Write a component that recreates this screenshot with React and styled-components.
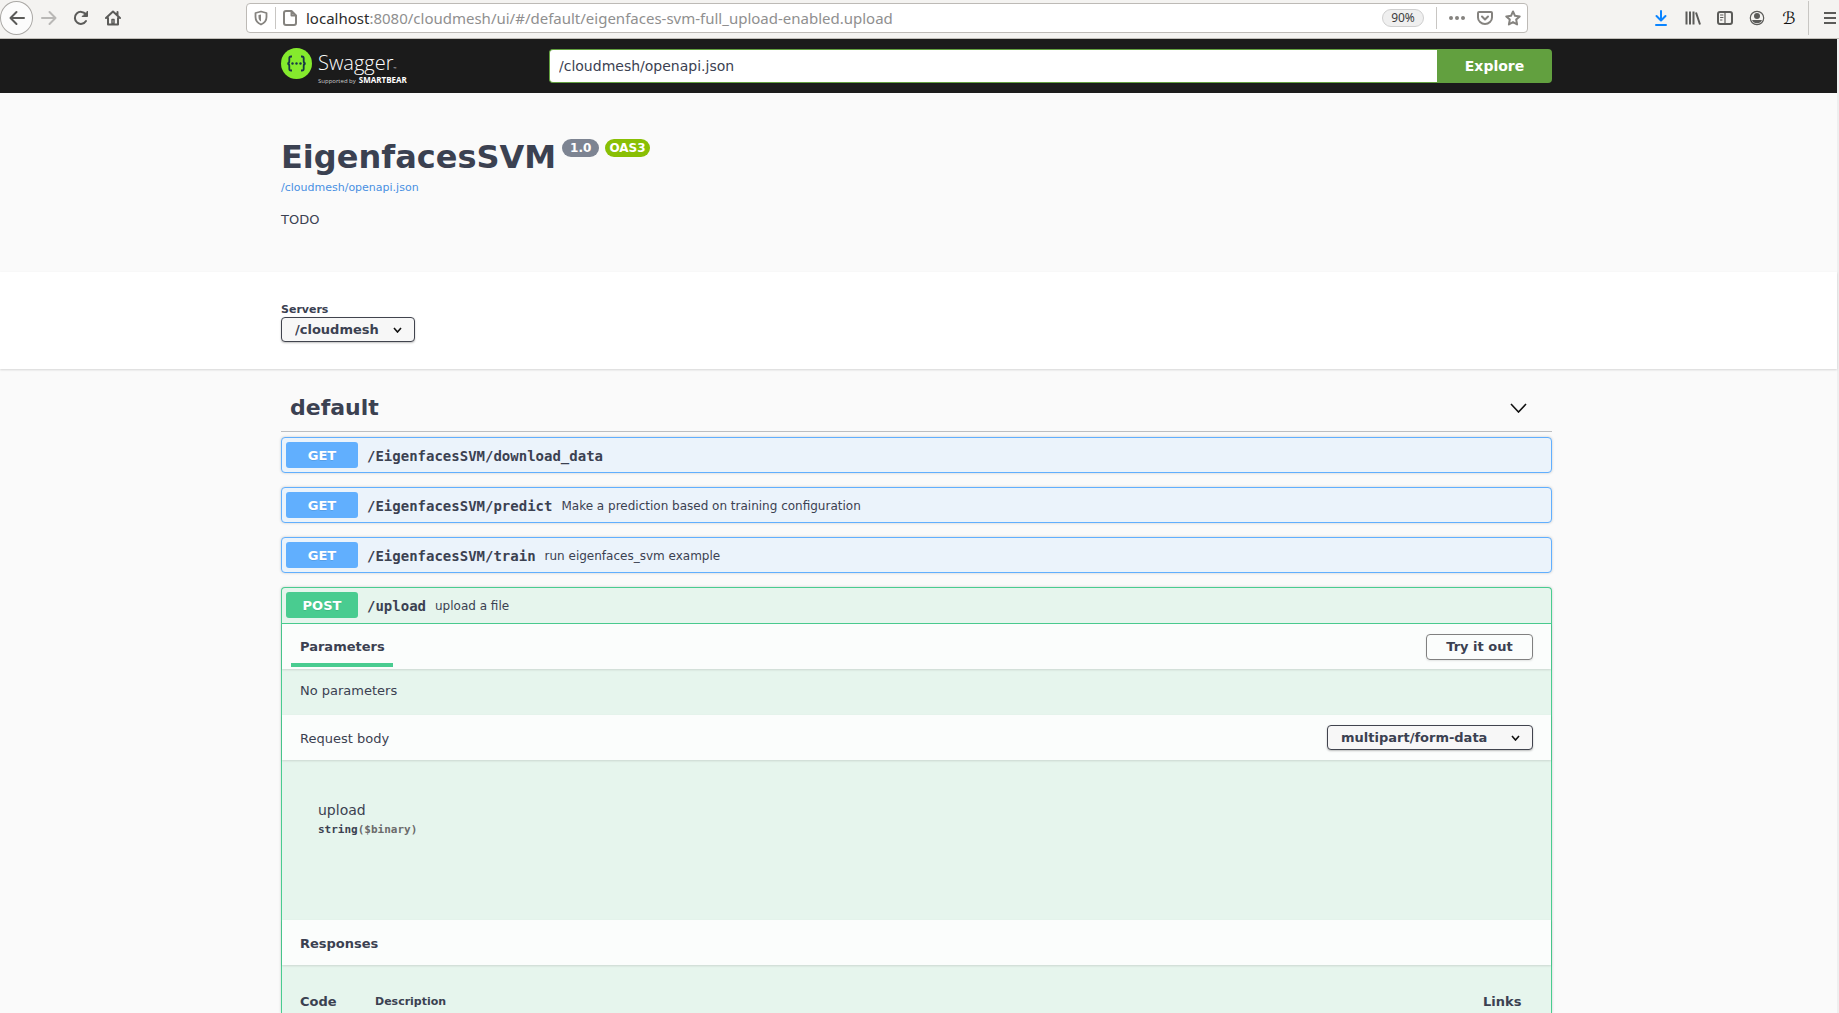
import React from "react";
import styled, { createGlobalStyle } from "styled-components";

const sans = '"DejaVu Sans", sans-serif';
const mono = '"DejaVu Sans Mono", monospace';
const ink = "#3b4151";
const methodColors = { GET: "#61affe", POST: "#49cc90" };
const methodTints = { GET: "#ebf3fb", POST: "#e6f5ed" };

const GlobalStyle = createGlobalStyle`
  * { box-sizing: border-box; }
  body { margin: 0; font-family: ${sans}; color: ${ink}; background: #fafafa; }
  button, input, select { font-family: inherit; color: inherit; margin: 0; }
  h1, h2, h3, h4, p { margin: 0; }
`;

const Shell = styled.div`
  display: flex;
  flex-direction: column;
  height: 100vh;
  overflow: hidden;
`;

/* Browser chrome */
const Chrome = styled.header`
  display: grid;
  grid-template-columns: 246px 1fr 311px;
  flex: none;
  height: 39px;
  background: #f4f3f1;
  border-bottom: 1px solid #c1beb9;
`;
const NavGroup = styled.nav`
  display: flex;
  align-items: center;
  height: 36px;
  gap: 16px;
`;
const IconButton = styled.button`
  display: flex;
  align-items: center;
  justify-content: center;
  flex: none;
  width: ${(p) => p.$w || 16}px;
  height: 24px;
  padding: 0;
  border: 0;
  background: none;
  color: ${(p) => p.$color || "#5b5b59"};
  svg { display: block; flex: none; }
`;
const BackButton = styled(IconButton)`
  width: 33px;
  height: 34px;
  border: 1px solid #aaa8a5;
  border-radius: 50%;
  background: #fcfcfc;
  margin-right: -8px;
`;
const AddressBar = styled.div`
  display: flex;
  align-items: center;
  height: 30px;
  margin-top: 3px;
  padding: 0 6px 0 7px;
  background: #fff;
  border: 1px solid #bdbab6;
  border-radius: 4px;
`;
const Rule = styled.span`
  width: 1px;
  height: ${(p) => p.$h || 22}px;
  margin: ${(p) => p.$m || "0 7px"};
  background: #c8c6c3;
`;
const Address = styled.div`
  flex: 1;
  min-width: 0;
  padding-left: 9px;
  overflow: hidden;
  white-space: nowrap;
  font: 15px/20px "Noto Sans", sans-serif;
  color: #8f8f8f;
  b { font-weight: 400; color: #2b2b2b; }
`;
const Zoom = styled.button`
  width: 42px;
  height: 18px;
  padding: 0;
  border: 1px solid #cfcfcf;
  border-radius: 9px;
  background: #efefef;
  font: 12px/16px "Noto Sans", sans-serif;
  color: #3c3c3c;
`;
const BarActions = styled.div`
  display: flex;
  align-items: center;
  gap: 12px;
`;
const ToolGroup = styled.div`
  display: flex;
  align-items: center;
  justify-content: flex-end;
  height: 36px;
  padding-right: 1px;
  gap: 16px;
`;
const Script = styled.span`
  font: italic 400 17px/24px "DejaVu Sans", sans-serif;
  color: #111;
`;

/* Page */
const Page = styled.div`
  display: flex;
  flex-direction: column;
  flex: 1;
  min-height: 0;
  border-right: 2px solid #efefef;
`;
const Wrapper = styled.div`
  width: 100%;
  max-width: 1315px;
  margin: 0 auto;
  padding: 0 24px 0 20px;
`;
const Topbar = styled.div`
  flex: none;
  padding: 9px 0 10px;
  background: #1b1b1b;
`;
const TopbarRow = styled(Wrapper)`
  display: flex;
  align-items: flex-start;
  height: 35px;
`;
const Brand = styled.a`
  display: flex;
  align-items: flex-start;
  width: 268px;
  gap: 6px;
  color: #fff;
  text-decoration: none;
  svg { flex: none; }
`;
const BrandName = styled.span`
  display: block;
  padding-top: 2px;
  font: 300 20px/26px "Open Sans", sans-serif;
  sup { font-size: 4px; line-height: 0; vertical-align: baseline; }
`;
const BrandNote = styled.span`
  display: flex;
  align-items: baseline;
  gap: 3px;
  font: 6px/8px "Open Sans", sans-serif;
  color: #ccc;
  b { color: #fff; font-size: 8px; font-weight: 700; }
`;
const SearchForm = styled.form`
  display: flex;
  flex: 1;
  height: 34px;
  margin-top: 1px;
`;
const SearchInput = styled.input`
  flex: 1;
  min-width: 0;
  padding: 0 9px;
  border: 1px solid #62a03f;
  border-right: 0;
  border-radius: 4px 0 0 4px;
  background: #fff;
  font-size: 14px;
  outline: none;
`;
const ExploreButton = styled.button`
  width: 115px;
  padding: 0;
  border: 0;
  border-radius: 0 4px 4px 0;
  background: #62a03f;
  color: #fff;
  font-size: 14px;
  font-weight: 700;
`;

const Info = styled.section`
  flex: none;
  height: 179px;
  padding-top: 45px;
`;
const TitleRow = styled.div`
  display: flex;
  align-items: flex-start;
  gap: 6px;
`;
const Title = styled.h1`
  font-size: 32px;
  line-height: 38px;
  font-weight: 700;
`;
const Badge = styled.span`
  height: 18px;
  margin-top: 1px;
  padding: ${(p) => (p.$narrow ? "0 4px" : "0 8px")};
  border-radius: 9px;
  background: ${(p) => p.$bg};
  color: #fff;
  font-size: 12px;
  line-height: 19px;
  font-weight: 700;
`;
const SpecLink = styled.a`
  display: block;
  margin-top: 4px;
  font-size: 11px;
  line-height: 16px;
  color: #4990e2;
  text-decoration: none;
`;
const Description = styled.p`
  margin-top: 15px;
  font-size: 13px;
  line-height: 18px;
`;

const Scheme = styled.section`
  flex: none;
  height: 97px;
  padding-top: 31px;
  background: #fff;
  box-shadow: 0 1px 2px rgba(0, 0, 0, 0.15);
`;
const ServerLabel = styled.label`
  display: block;
  font-size: 11px;
  line-height: 14px;
  font-weight: 700;
`;
const SelectFrame = styled.span`
  display: grid;
  align-items: center;
  width: ${(p) => p.$w}px;
  svg {
    grid-area: 1 / 1;
    justify-self: end;
    margin-right: 13px;
    pointer-events: none;
  }
`;
const SelectBox = styled.select`
  grid-area: 1 / 1;
  width: 100%;
  height: 25px;
  padding: 0 32px 0 13px;
  appearance: none;
  border: 1px solid #41444e;
  border-radius: 4px;
  background: #f7f7f7;
  box-shadow: 0 1px 2px rgba(0, 0, 0, 0.25);
  font-size: 13px;
  font-weight: 700;
`;

const Operations = styled.main`
  display: flex;
  flex-direction: column;
  flex: 1;
  min-height: 0;
`;
const OperationsWrapper = styled(Wrapper)`
  display: flex;
  flex-direction: column;
  flex: 1;
  gap: 14px;
`;
const TagHeader = styled.div`
  display: flex;
  align-items: center;
  justify-content: space-between;
  flex: none;
  height: 63px;
  padding: 16px 26px 0 9px;
  margin-bottom: -9px;
  border-bottom: 1px solid #bcbec1;
`;
const TagName = styled.h2`
  font-size: 22px;
  line-height: 28px;
  font-weight: 700;
`;
const Block = styled.section`
  flex: ${(p) => (p.$open ? "1 0 auto" : "none")};
  border: 1px solid ${(p) => methodColors[p.$method]};
  border-bottom-width: ${(p) => (p.$open ? 0 : 1)}px;
  border-radius: ${(p) => (p.$open ? "4px 4px 0 0" : "4px")};
  background: ${(p) => methodTints[p.$method]};
  box-shadow: 0 0 3px rgba(0, 0, 0, 0.19);
`;
const Summary = styled.button`
  display: flex;
  align-items: center;
  width: 100%;
  padding: ${(p) => (p.$open ? "4px 4px 5px" : "4px")};
  border: 0;
  border-bottom: ${(p) => (p.$open ? `1px solid ${methodColors.POST}` : "0")};
  background: none;
  text-align: left;
`;
const Method = styled.span`
  width: 72px;
  height: 26px;
  border-radius: 3px;
  background: ${(p) => methodColors[p.$method]};
  color: #fff;
  font-size: 13px;
  line-height: 27px;
  font-weight: 700;
  text-align: center;
  text-shadow: 0 1px 0 rgba(0, 0, 0, 0.1);
`;
const Path = styled.span`
  padding: 2px 9px 0;
  font: 700 14px/20px ${mono};
`;
const Note = styled.span`
  padding-top: 1px;
  font-size: 12px;
  line-height: 20px;
`;
const SectionHeader = styled.div`
  display: flex;
  align-items: center;
  justify-content: space-between;
  height: 45px;
  padding: 0 18px;
  background: #fbfdfc;
  box-shadow: 0 1px 2px rgba(0, 0, 0, 0.12);
  font-size: 13px;
`;
const ActiveTab = styled.h4`
  height: 45px;
  margin-left: -9px;
  font-size: 13px;
  line-height: 46px;
  span {
    display: block;
    height: 43px;
    padding: 0 8px 0 9px;
    border-bottom: 4px solid #49cc90;
  }
`;
const SectionTitle = styled.h4`
  padding-top: 2px;
  font-size: 13px;
  font-weight: ${(p) => (p.$plain ? 400 : 700)};
`;
const TryButton = styled.button`
  width: 107px;
  height: 26px;
  padding: 0;
  border: 1px solid #808080;
  border-radius: 4px;
  background: transparent;
  box-shadow: 0 1px 2px rgba(0, 0, 0, 0.1);
  font-size: 13px;
  font-weight: 700;
`;
const Empty = styled.p`
  height: 46px;
  padding: 13px 18px;
  font-size: 13px;
  line-height: 18px;
`;
const BodySchema = styled.div`
  height: 160px;
  padding: 38px 36px;
`;
const FieldName = styled.div`
  font-size: 14px;
  line-height: 24px;
`;
const FieldType = styled.div`
  font: 700 11px/16px ${mono};
  span { color: #6b6b6b; }
`;
const ResponseTable = styled.table`
  width: calc(100% - 36px);
  margin: 28px 18px 0;
  border-collapse: collapse;
  th {
    padding: 0;
    text-align: left;
    font-size: 13px;
    line-height: 18px;
  }
  th:first-child { width: 75px; }
  th:nth-child(2) { font-size: 11px; }
  th:last-child { width: 50px; }
`;

const Chevron = ({ w = 9, h = 6 }) => (
  <svg width={w} height={h} viewBox={`0 0 ${w} ${h}`} fill="none" stroke="#111" strokeWidth="1.6">
    <path d={`M1 1 L${w / 2} ${h - 1} L${w - 1} 1`} />
  </svg>
);

const Icon = ({ children, fill = "none" }) => (
  <svg width="16" height="16" viewBox="0 0 16 16" fill={fill} stroke="currentColor" strokeWidth="2" strokeLinecap="round" strokeLinejoin="round">
    {children}
  </svg>
);

const operations = [
  { method: "GET", path: "/EigenfacesSVM/download_data" },
  { method: "GET", path: "/EigenfacesSVM/predict", note: "Make a prediction based on training configuration" },
  { method: "GET", path: "/EigenfacesSVM/train", note: "run eigenfaces_svm example" },
];

function OperationSummary({ method, path, note, open }) {
  return (
    <Summary type="button" $open={open} aria-expanded={!!open}>
      <Method $method={method}>{method}</Method>
      <Path>{path}</Path>
      {note && <Note>{note}</Note>}
    </Summary>
  );
}

function BrowserBar() {
  return (
    <Chrome>
      <NavGroup>
        <BackButton aria-label="Back">
          <Icon><path d="M15 8H1.5M7.5 2L1.5 8l6 6" /></Icon>
        </BackButton>
        <IconButton aria-label="Forward" $color="#b9b8b6">
          <Icon><path d="M1 8h13.5M8.5 2l6 6-6 6" /></Icon>
        </IconButton>
        <IconButton aria-label="Reload">
          <Icon><path d="M13 11A6 6 0 1 1 12.700 4.300" /><path d="M14.500 1.500v5H9.500z" fill="currentColor" strokeWidth="1" /></Icon>
        </IconButton>
        <IconButton aria-label="Home">
          <Icon><path d="M1 8l7-6.500L15 8M3 8v6.500h10V8M12.500 2v3" /><path d="M7 9.500h2v4H7z" strokeWidth="1.500" /></Icon>
        </IconButton>
      </NavGroup>
      <AddressBar>
        <IconButton aria-label="Tracking protection" $w={14} $color="#85837f">
          <svg width="14" height="16" viewBox="0 0 14 16" fill="none" stroke="currentColor" strokeWidth="1.8" strokeLinejoin="round">
            <path d="M7 1.500L12.500 3v4c0 3.500-2 6-5.500 7.500C3.500 13 1.500 10.500 1.500 7V3z" />
            <path d="M7 4.500V11.500C5.300 10.500 4.500 9 4.500 7V5z" fill="currentColor" stroke="none" />
          </svg>
        </IconButton>
        <Rule />
        <IconButton aria-label="Site information" $w={14} $color="#85837f">
          <svg width="14" height="16" viewBox="0 0 14 16" fill="none" stroke="currentColor" strokeWidth="2" strokeLinejoin="round">
            <path d="M3 1h5.500L13 5.500V13a2 2 0 0 1-2 2H3a2 2 0 0 1-2-2V3a2 2 0 0 1 2-2zM8.500 1v4.500H13" />
          </svg>
        </IconButton>
        <Address><b>localhost</b>:8080/cloudmesh/ui/#/default/eigenfaces-svm-full_upload-enabled.upload</Address>
        <Zoom type="button">90%</Zoom>
        <Rule $m="0 12px" />
        <BarActions>
          <IconButton aria-label="Page actions" $color="#85837f">
            <Icon fill="currentColor"><path d="M2 8h.01M8 8h.01M14 8h.01" strokeWidth="4" /></Icon>
          </IconButton>
          <IconButton aria-label="Save to Pocket" $color="#85837f">
            <Icon><path d="M2 2h12a1 1 0 0 1 1 1v4.500a7 6.500 0 0 1-14 0V3a1 1 0 0 1 1-1zM5 6.500l3 3 3-3" /></Icon>
          </IconButton>
          <IconButton aria-label="Bookmark" $color="#85837f">
            <Icon><path d="M8 1.500l2 4.300 4.700.6-3.500 3.200.9 4.900L8 12.100l-4.100 2.400.9-4.900L1.300 6.400 6 5.800z" /></Icon>
          </IconButton>
        </BarActions>
      </AddressBar>
      <ToolGroup>
        <IconButton aria-label="Downloads" $color="#0a84ff">
          <Icon><path d="M8 1v9M3.500 6L8 10.500 12.500 6M3 15h10" /></Icon>
        </IconButton>
        <IconButton aria-label="Library">
          <Icon><path d="M1.500 1.500v13M5 1.500v13M8.500 1.500v13M11 2.500L15 14.500" strokeLinecap="butt" /></Icon>
        </IconButton>
        <IconButton aria-label="Sidebar">
          <Icon><rect x="1" y="2" width="14" height="12" rx="2" /><path d="M8 2v12" strokeWidth="1.2" /><path d="M3.500 5H6M3.500 7.500H6M3.500 10H5" strokeWidth="1" /></Icon>
        </IconButton>
        <IconButton aria-label="Account">
          <Icon><circle cx="8" cy="8" r="6.700" strokeWidth="1.2" /><circle cx="8" cy="6" r="3" fill="currentColor" stroke="none" /><path d="M3 10h10C12 12.300 10.500 13.300 8 13.300S4 12.300 3 10z" fill="currentColor" stroke="none" /></Icon>
        </IconButton>
        <IconButton aria-label="Extension"><Script>ℬ</Script></IconButton>
        <Rule $h={34} $m="0 -3px 0 -5px" />
        <IconButton aria-label="Menu">
          <Icon><path d="M2 3h12M2 8h12M2 13h12" strokeLinecap="butt" /></Icon>
        </IconButton>
      </ToolGroup>
    </Chrome>
  );
}

export default function App() {
  return (
    <Shell>
      <GlobalStyle />
      <BrowserBar />
      <Page>
        <Topbar>
          <TopbarRow>
            <Brand href="#">
              <svg width="31" height="31" viewBox="0 0 31 31">
                <circle cx="15.500" cy="15.500" r="15.500" fill="#85ea2d" />
                <g fill="none" stroke="#173647" strokeWidth="1.8">
                  <path d="M11 8.500H10q-1.700 0-1.700 1.800v2.700q0 2.500-2 2.500 2 0 2 2.500v2.700q0 1.800 1.700 1.800h1" />
                  <path d="M20 8.500h1q1.700 0 1.700 1.800v2.700q0 2.500 2 2.500-2 0-2 2.500v2.700q0 1.800-1.700 1.800h-1" />
                </g>
                <g fill="#173647">
                  <circle cx="11.500" cy="15.500" r="1.200" />
                  <circle cx="15.500" cy="15.500" r="1.200" />
                  <circle cx="19.500" cy="15.500" r="1.200" />
                </g>
              </svg>
              <span>
                <BrandName>Swagger<sup>™</sup></BrandName>
                <BrandNote>Supported by <b>SMARTBEAR</b></BrandNote>
              </span>
            </Brand>
            <SearchForm onSubmit={(e) => e.preventDefault()}>
              <SearchInput aria-label="API definition" defaultValue="/cloudmesh/openapi.json" />
              <ExploreButton type="submit">Explore</ExploreButton>
            </SearchForm>
          </TopbarRow>
        </Topbar>

        <Info>
          <Wrapper>
            <TitleRow>
              <Title>EigenfacesSVM</Title>
              <Badge $bg="#7d8492">1.0</Badge>
              <Badge $bg="#89bf04" $narrow>OAS3</Badge>
            </TitleRow>
            <SpecLink href="#">/cloudmesh/openapi.json</SpecLink>
            <Description>TODO</Description>
          </Wrapper>
        </Info>

        <Scheme>
          <Wrapper>
            <ServerLabel htmlFor="servers">Servers</ServerLabel>
            <SelectFrame $w={134}>
              <SelectBox id="servers"><option>/cloudmesh</option></SelectBox>
              <Chevron />
            </SelectFrame>
          </Wrapper>
        </Scheme>

        <Operations>
          <OperationsWrapper>
            <TagHeader>
              <TagName>default</TagName>
              <IconButton aria-label="Collapse operations">
                <Chevron w={17} h={10} />
              </IconButton>
            </TagHeader>
            {operations.map((op) => (
              <Block key={op.path} $method={op.method}>
                <OperationSummary {...op} />
              </Block>
            ))}
            <Block $method="POST" $open>
              <OperationSummary method="POST" path="/upload" note="upload a file" open />
              <SectionHeader>
                <ActiveTab><span>Parameters</span></ActiveTab>
                <TryButton type="button">Try it out</TryButton>
              </SectionHeader>
              <Empty>No parameters</Empty>
              <SectionHeader>
                <SectionTitle as="label" htmlFor="content-type" $plain>Request body</SectionTitle>
                <SelectFrame $w={206}>
                  <SelectBox id="content-type"><option>multipart/form-data</option></SelectBox>
                  <Chevron />
                </SelectFrame>
              </SectionHeader>
              <BodySchema>
                <FieldName>upload</FieldName>
                <FieldType>string<span>($binary)</span></FieldType>
              </BodySchema>
              <SectionHeader>
                <SectionTitle>Responses</SectionTitle>
              </SectionHeader>
              <ResponseTable>
                <thead>
                  <tr><th scope="col">Code</th><th scope="col">Description</th><th scope="col">Links</th></tr>
                </thead>
              </ResponseTable>
            </Block>
          </OperationsWrapper>
        </Operations>
      </Page>
    </Shell>
  );
}
